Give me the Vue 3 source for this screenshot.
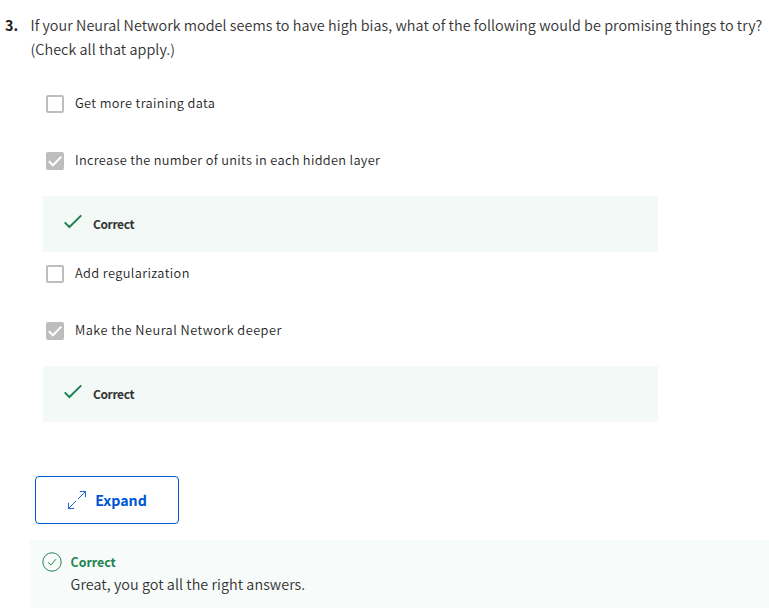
<script setup>
const options = [
  { label: 'Get more training data', tracking: 0.36, checked: false },
  { label: 'Increase the number of units in each hidden layer', tracking: 0.31, checked: true },
  { label: 'Add regularization', tracking: 0.38, checked: false },
  { label: 'Make the Neural Network deeper', tracking: 0.45, checked: true },
]
</script>

<template>
  <main class="quiz">
    <section class="question">
      <span class="number">3.</span>
      <p class="prompt">
        If your Neural Network model seems to have high bias, what of the following would be promising things to try?<br />
        (Check all that apply.)
      </p>
    </section>

    <ul class="options">
      <li v-for="option in options" :key="option.label" class="option">
        <div class="choice">
          <span class="box" :class="{ checked: option.checked }">
            <svg v-if="option.checked" width="18" height="18" viewBox="0 0 18 18">
              <path d="M2.8 9.2 7 13.3 15.3 4.6" fill="none" stroke="#fff" stroke-width="2" />
            </svg>
          </span>
          <span class="label" :style="{ letterSpacing: option.tracking + 'px' }">{{ option.label }}</span>
        </div>
        <div v-if="option.checked" class="feedback">
          <svg width="20" height="16" viewBox="0 0 20 16">
            <path d="M1.7 8.4 6.4 13 18.3 1.4" fill="none" stroke="#1f8354" stroke-width="2" />
          </svg>
          <span class="verdict">Correct</span>
        </div>
      </li>
    </ul>

    <button class="expand" type="button">
      <svg width="20" height="20" viewBox="0 0 20 20" fill="none" stroke="#0056d2" stroke-width="0.9">
        <path d="M11 9 18.3 1.7M12.8 1.5h5.7v5.7M9 11 1.7 18.3M1.5 12.8v5.7h5.7" />
      </svg>
      <span>Expand</span>
    </button>

    <section class="result">
      <svg width="20" height="20" viewBox="0 0 20 20" fill="none" stroke="#1f8354">
        <circle cx="10" cy="10" r="9.2" />
        <path d="M6 10.3 8.8 13 14 7.2" />
      </svg>
      <div>
        <h2>Correct</h2>
        <p>Great, you got all the right answers.</p>
      </div>
    </section>
  </main>
</template>

<style>
body {
  background: #fff;
}
</style>

<style scoped>
.quiz {
  box-sizing: border-box;
  height: 612px;
  padding-top: 13px;
  overflow: hidden;
  font-family: "Noto Sans CJK SC", "Noto Sans", sans-serif;
  color: #333;
  white-space: nowrap;
}
.question {
  display: flex;
  padding-left: 5px;
  height: 62px;
  line-height: 24px;
  font-size: 14.4px;
}
.number {
  width: 25.5px;
  font-weight: 700;
  color: #1f1f1f;
}
.prompt {
  margin: 0;
  font-weight: 350;
  letter-spacing: 0.04px;
  color: #333;
}
.options {
  list-style: none;
  margin: 0;
  padding: 0;
  height: 401px;
}
.choice {
  display: flex;
  align-items: center;
  height: 57px;
  padding-left: 46px;
}
.box {
  box-sizing: border-box;
  width: 18px;
  height: 18px;
  border: 2px solid #bdbdbd;
  border-radius: 2px;
  margin-right: 11px;
}
.box.checked {
  border: 0;
  background: #bdbdbd;
}
.box svg {
  display: block;
}
.label {
  font-size: 12.8px;
  font-weight: 350;
  line-height: 20px;
  padding-bottom: 2px;
  color: #1f1f1f;
}
.feedback {
  display: flex;
  align-items: center;
  box-sizing: border-box;
  width: 615px;
  height: 56px;
  margin: 7px 0 -7px 43px;
  padding-left: 20px;
  background: #f3f9f7;
}
.feedback svg {
  margin: -5px 10px 0 0;
}
.verdict {
  font-size: 12px;
  font-weight: 700;
  letter-spacing: -0.4px;
  line-height: 18px;
}
.expand {
  display: flex;
  align-items: center;
  justify-content: center;
  box-sizing: border-box;
  width: 144px;
  height: 48px;
  margin-left: 35px;
  padding: 0;
  gap: 8px;
  border: 1px solid #0056d2;
  border-radius: 4px;
  background: #fff;
  color: #0056d2;
  font: 700 14.2px/24px "Noto Sans CJK SC", sans-serif;
}
.result {
  display: flex;
  box-sizing: border-box;
  height: 68px;
  margin: 16px 0 0 30px;
  padding: 12px 0 0 12px;
  background: #f7fbfa;
}
.result svg {
  margin-right: 8.5px;
}
.result h2 {
  margin: 0;
  font-size: 12.4px;
  font-weight: 700;
  line-height: 20px;
  color: #1f8354;
}
.result p {
  margin: 0;
  font-size: 14.4px;
  font-weight: 350;
  letter-spacing: 0.04px;
  line-height: 24px;
  color: #333;
}
</style>
